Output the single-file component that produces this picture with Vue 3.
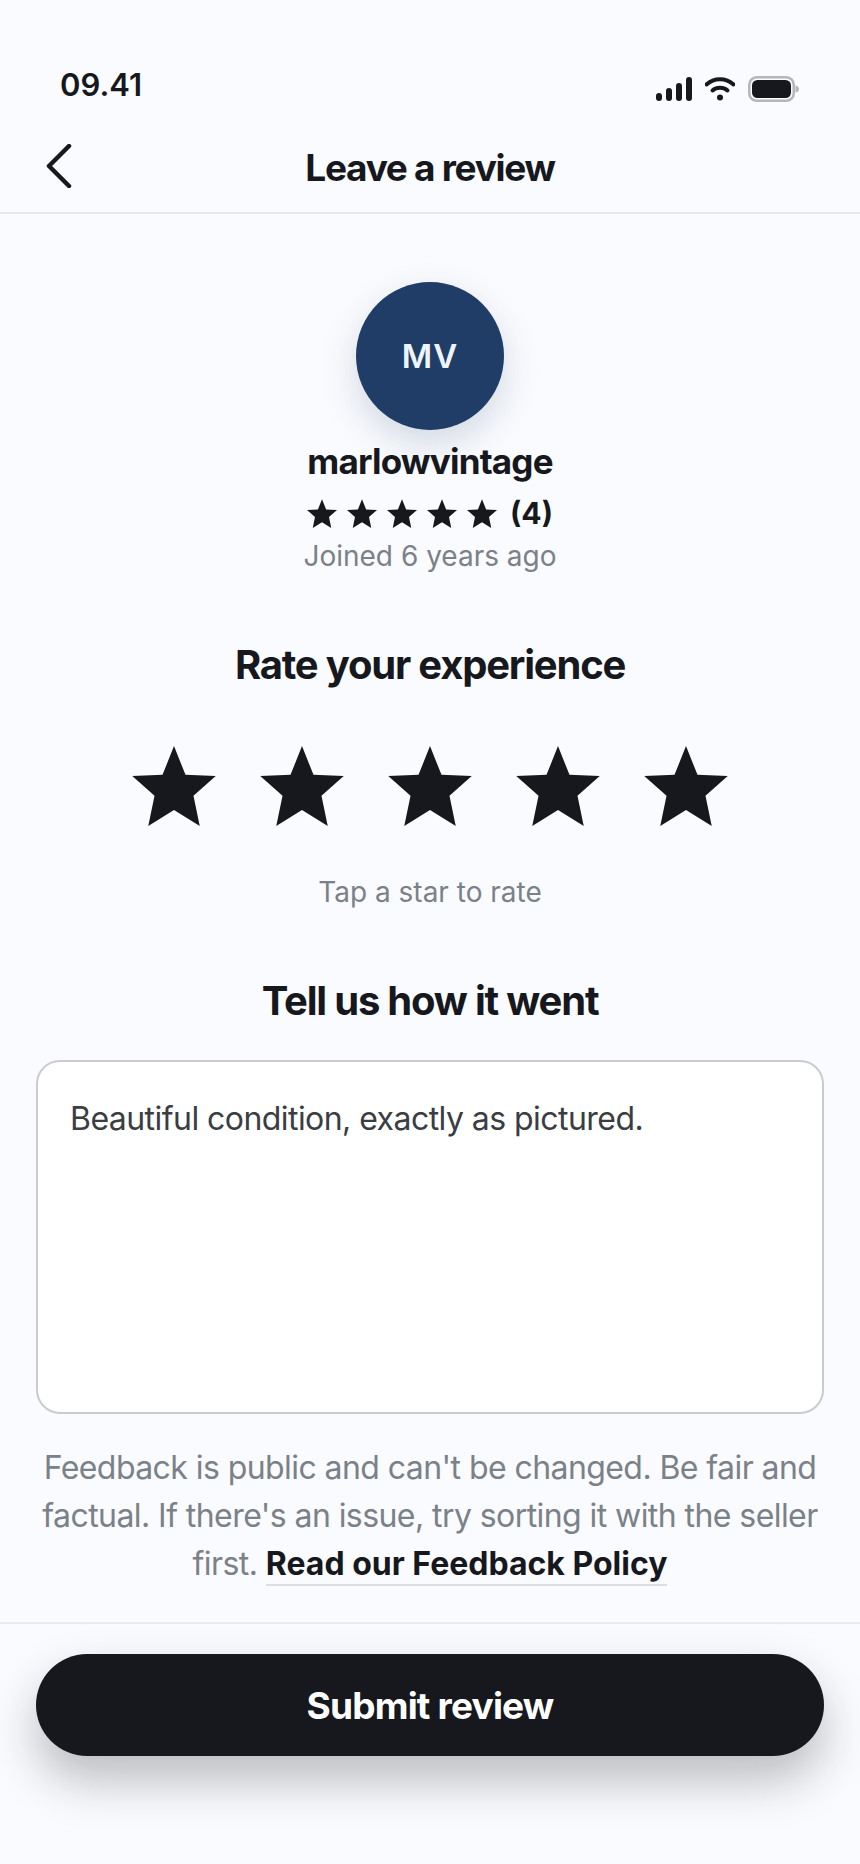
<template>
  <div class="screen">
    <div class="status-bar">
      <span class="time">09.41</span>
      <div class="status-icons">
        <svg width="36" height="24" viewBox="0 0 36 24">
          <rect x="0" y="16" width="6" height="8" rx="3" />
          <rect x="10" y="11" width="6" height="13" rx="3" />
          <rect x="20" y="6" width="6" height="18" rx="3" />
          <rect x="30" y="0" width="6" height="24" rx="3" />
        </svg>
        <svg width="30" height="24" viewBox="0 0 30 24">
          <path d="M1.500 7.500C9 .5 21 .5 28.500 7.500" class="wifi" />
          <path d="M7.500 13.500C11.500 9.800 18.500 9.800 22.500 13.500" class="wifi" />
          <circle cx="15" cy="20.500" r="3" />
        </svg>
        <svg width="51" height="26" viewBox="0 0 51 26">
          <rect x="1.250" y="1.250" width="44.500" height="23.500" rx="7.500" class="batt-edge" />
          <rect x="4" y="4" width="39" height="18" rx="5.500" />
          <path d="M47.500 9.500c2.500.5 3.500 2 3.500 3.500s-1 3-3.500 3.500z" class="batt-nub" />
        </svg>
      </div>
    </div>

    <header class="nav">
      <button class="back" aria-label="Back">
        <svg width="26" height="44" viewBox="0 0 26 44">
          <path d="M23 2L3 22L23 42" />
        </svg>
      </button>
      <h1>Leave a review</h1>
    </header>

    <main class="content">
      <section class="seller">
        <div class="avatar">MV</div>
        <div class="seller-name">marlowvintage</div>
        <div class="seller-rating">
          <div class="small-stars">
            <svg v-for="n in 5" :key="n" width="30" height="29" viewBox="0 0 24 23">
              <path :d="starPath" />
            </svg>
          </div>
          <span class="count">(4)</span>
        </div>
        <div class="joined">Joined 6 years ago</div>
      </section>

      <section class="rate">
        <h2>Rate your experience</h2>
        <div class="big-stars">
          <svg v-for="n in 5" :key="n" width="84" height="80" viewBox="0 0 24 23">
            <path :d="starPath" />
          </svg>
        </div>
        <div class="hint">Tap a star to rate</div>
      </section>

      <section class="feedback">
        <h2>Tell us how it went</h2>
        <div class="textbox">Beautiful condition, exactly as pictured.</div>
        <p class="policy">
          Feedback is public and can't be changed. Be fair and factual. If there's an issue, try sorting it with the seller first.
          <a href="#">Read our Feedback Policy</a>
        </p>
      </section>
    </main>

    <footer class="actions">
      <button class="submit">Submit review</button>
    </footer>
  </div>
</template>

<script setup>
const starPath = 'M12 0L15.300 8.300L24 8.600L17.600 14.300L19.400 23L12 18.400L4.600 23L6.400 14.300L0 8.600L8.700 8.300Z'
</script>

<style>
html,
body {
  margin: 0;
  background: #fafbfe;
}
</style>

<style scoped>
.screen {
  width: 860px;
  height: 1864px;
  display: flex;
  flex-direction: column;
  background: #fafbfe;
  color: #16181d;
  font-family: Inter, "Liberation Sans", sans-serif;
  overflow: hidden;
}

.status-bar {
  height: 128px;
  box-sizing: border-box;
  padding: 65px 61px 0 60px;
  display: flex;
  justify-content: space-between;
  align-items: flex-start;
}

.time {
  font-size: 31px;
  line-height: 40px;
  font-weight: 600;
}

.status-icons {
  display: flex;
  gap: 13px;
  align-items: center;
  padding-top: 11px;
  fill: #16181d;
}

.wifi {
  fill: none;
  stroke: #16181d;
  stroke-width: 4;
  stroke-linecap: round;
}

.batt-edge {
  fill: none;
  stroke: #b4b6b9;
  stroke-width: 2.500;
}

.batt-nub {
  fill: #b4b6b9;
}

.nav {
  position: relative;
  height: 84px;
  display: flex;
  align-items: center;
  justify-content: center;
  border-bottom: 2px solid #e6e8eb;
}

.nav h1 {
  margin: 0 0 4px;
  font-size: 37px;
  line-height: 44px;
  font-weight: 700;
  letter-spacing: -1.300px;
}

.back {
  position: absolute;
  left: 46px;
  top: 16px;
  padding: 0;
  border: 0;
  background: none;
  line-height: 0;
}

.back path {
  fill: none;
  stroke: #16181d;
  stroke-width: 4.500;
  stroke-linecap: round;
  stroke-linejoin: round;
}

.content {
  flex: 1;
  display: flex;
  flex-direction: column;
  align-items: center;
}

.seller {
  display: flex;
  flex-direction: column;
  align-items: center;
  padding-top: 68px;
}

.avatar {
  width: 148px;
  height: 148px;
  border-radius: 50%;
  background: #1f3d66;
  color: #eef4fb;
  display: flex;
  align-items: center;
  justify-content: center;
  font-size: 33px;
  font-weight: 600;
  letter-spacing: 1px;
  box-shadow: 0 14px 36px rgba(31, 61, 102, 0.18);
}

.seller-name {
  margin-top: 4px;
  font-size: 35px;
  line-height: 54px;
  font-weight: 700;
  letter-spacing: -0.800px;
}

.seller-rating {
  display: flex;
  align-items: center;
  gap: 13px;
  height: 40px;
  margin-top: 5px;
}

.small-stars {
  display: flex;
  gap: 10px;
  fill: #16181d;
}

.count {
  font-size: 30px;
  font-weight: 700;
}

.joined {
  font-size: 28px;
  line-height: 40px;
  color: #7b8189;
  margin-top: 3px;
}

.rate {
  display: flex;
  flex-direction: column;
  align-items: center;
  margin-top: 63px;
}

h2 {
  margin: 0;
  font-size: 40px;
  line-height: 52px;
  font-weight: 700;
  letter-spacing: -1.200px;
}

.big-stars {
  display: flex;
  gap: 44px;
  margin-top: 55px;
  fill: #16181d;
}

.hint {
  margin-top: 46px;
  font-size: 28px;
  line-height: 40px;
  color: #7b8189;
}

.feedback {
  display: flex;
  flex-direction: column;
  align-items: center;
  width: 788px;
  margin-top: 63px;
}

.textbox {
  width: 100%;
  height: 354px;
  margin-top: 33px;
  box-sizing: border-box;
  padding: 35px 32px;
  background: #fff;
  border: 2px solid #c9cbce;
  border-radius: 24px;
  font-size: 32px;
  line-height: 44px;
  letter-spacing: -0.550px;
  color: #3a3d42;
}

.policy {
  margin: 30px -6px 0;
  text-align: center;
  font-size: 32px;
  line-height: 48px;
  letter-spacing: -0.570px;
  color: #7b8189;
}

.policy a {
  color: #16181d;
  font-weight: 700;
  letter-spacing: 0;
  text-decoration: none;
  padding-bottom: 1px;
  border-bottom: 2px solid #dcdee1;
}

.actions {
  height: 242px;
  box-sizing: border-box;
  padding: 30px 36px 0;
  border-top: 2px solid #e8eaed;
}

.submit {
  width: 100%;
  height: 102px;
  border: 0;
  border-radius: 51px;
  background: #16181d;
  color: #fff;
  font-family: inherit;
  font-size: 37px;
  font-weight: 700;
  letter-spacing: -0.800px;
  box-shadow: 0 24px 48px rgba(22, 24, 29, 0.28);
}
</style>
